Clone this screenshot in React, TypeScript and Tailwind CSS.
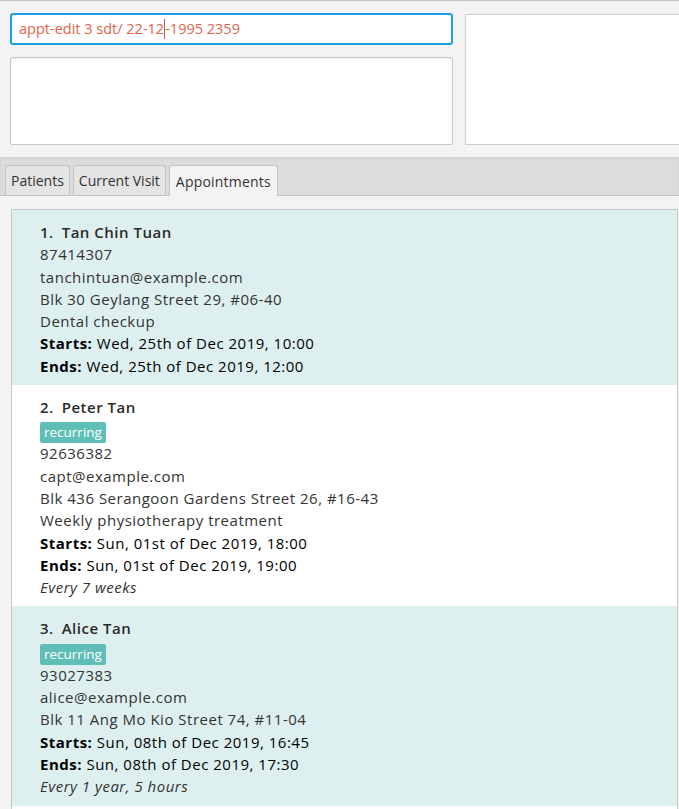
const appointments = [
  {
    index: 1,
    name: "Tan Chin Tuan",
    recurring: false,
    phone: "87414307",
    email: "tanchintuan@example.com",
    address: "Blk 30 Geylang Street 29, #06-40",
    description: "Dental checkup",
    starts: "Wed, 25th of Dec 2019, 10:00",
    ends: "Wed, 25th of Dec 2019, 12:00",
    repeat: "",
  },
  {
    index: 2,
    name: "Peter Tan",
    recurring: true,
    phone: "92636382",
    email: "capt@example.com",
    address: "Blk 436 Serangoon Gardens Street 26, #16-43",
    description: "Weekly physiotherapy treatment",
    starts: "Sun, 01st of Dec 2019, 18:00",
    ends: "Sun, 01st of Dec 2019, 19:00",
    repeat: "Every 7 weeks",
  },
  {
    index: 3,
    name: "Alice Tan",
    recurring: true,
    phone: "93027383",
    email: "alice@example.com",
    address: "Blk 11 Ang Mo Kio Street 74, #11-04",
    description: "",
    starts: "Sun, 08th of Dec 2019, 16:45",
    ends: "Sun, 08th of Dec 2019, 17:30",
    repeat: "Every 1 year, 5 hours",
  },
];

const App: React.FC = () => {
  return (
    <div
      className="w-[679px] h-[809px] overflow-hidden bg-[#f3f3f3] border-t border-[#c4c4c4] flex flex-col"
      style={{ fontFamily: '"Open Sans", "Noto Sans", sans-serif' }}
    >
      {/* Command + result area */}
      <div className="flex h-[156px] shrink-0">
        <div className="w-[443px] ml-[10px] flex flex-col">
          <div className="mt-[12px] h-[32px] bg-white border-2 border-[#1ba1e2] rounded-[3px] flex items-center pl-[7px] text-[14.5px] text-[#e0644c]">
            <span>appt-edit 3 sdt/ 22-12</span>
            <span className="w-px h-[20px] bg-[#c05a4a]" />
            <span>-1995 2359</span>
          </div>
          <div className="mt-[12px] h-[88px] bg-white border border-[#c8c8c8] rounded-[2px] shadow-[inset_0_1px_2px_rgba(0,0,0,0.08)]" />
        </div>
        <div className="ml-[12px] mt-[13px] h-[131px] flex-1 -mr-[4px] bg-white border border-[#cfcfcf]" />
      </div>

      {/* Tab header */}
      <div className="h-[39px] shrink-0 bg-[#dcdcdc] border-b border-[#c2c2c2] shadow-[inset_0_2px_3px_rgba(0,0,0,0.06)] flex items-end pl-[5px] gap-[3px] text-[14px] text-[#333]">
        <div className="h-[30px] px-[5px] flex items-center bg-[#e4e4e4] border border-b-0 border-[#c4c4c4] rounded-t-[3px]">
          Patients
        </div>
        <div className="h-[30px] px-[5px] flex items-center bg-[#e4e4e4] border border-b-0 border-[#c4c4c4] rounded-t-[3px]">
          Current Visit
        </div>
        <div className="h-[31px] -mb-px px-[6px] flex items-center bg-[#f3f3f3] border border-b-0 border-[#c4c4c4] rounded-t-[3px] tracking-[0.2px]">
          Appointments
        </div>
      </div>

      {/* Appointment list */}
      <div className="mt-[13px] ml-[11px] mr-[1px] flex-1 bg-white border border-[#c8c8c8] border-b-0">
        {appointments.map((a) => (
          <div
            key={a.index}
            className={`pl-[28px] pt-[11px] pb-[8px] text-[15px] leading-[22.3px] tracking-[0.5px] text-[#333] ${
              a.index % 2 === 1 ? "bg-[#ddf0ef]" : "bg-white"
            }`}
          >
            <div className="font-semibold text-[#2a2a2a]">
              {a.index}.<span className="ml-[8px]">{a.name}</span>
            </div>
            {a.recurring && (
              <div className="h-[24px] pt-[2px]">
                <span className="inline-block bg-[#5fbfb7] text-white text-[13.5px] leading-[21px] tracking-normal px-[4px] rounded-[2px]">
                  recurring
                </span>
              </div>
            )}
            <div>{a.phone}</div>
            <div>{a.email}</div>
            <div>{a.address}</div>
            {a.description && <div>{a.description}</div>}
            <div className="text-black">
              <span className="font-bold">Starts:</span> {a.starts}
            </div>
            <div className="text-black">
              <span className="font-bold">Ends:</span> {a.ends}
            </div>
            {a.repeat && <div className="italic">{a.repeat}</div>}
          </div>
        ))}
      </div>
    </div>
  );
};

export default App;
